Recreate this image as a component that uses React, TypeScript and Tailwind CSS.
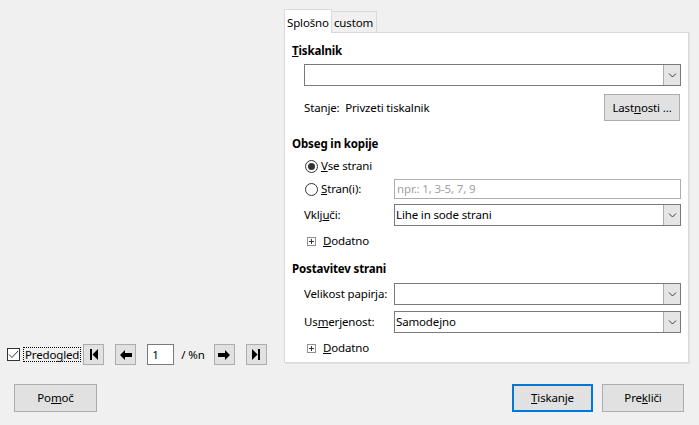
import React from "react";

const font = { fontFamily: '"Segoe UI", "Noto Sans", "Open Sans", sans-serif' };

const Chevron = () => (
  <svg width="9" height="6" viewBox="0 0 9 6">
    <path d="M1 1.5 L4.5 5 L8 1.5" fill="none" stroke="#404040" strokeWidth="1" />
  </svg>
);

const Combo = ({ value }: { value?: string }) => (
  <div className="flex-1 h-[22px] flex items-stretch bg-white border border-[#7a7a7a]">
    <div className="flex-1 flex items-center pl-[1px] text-black">{value}</div>
    <div className="w-[17px] flex items-center justify-center bg-[#e5e5e5] border-l border-[#adadad]">
      <Chevron />
    </div>
  </div>
);

const Plus = () => (
  <span className="w-[9px] h-[9px] border border-[#919191] bg-white flex items-center justify-center">
    <svg width="5" height="5" viewBox="0 0 5 5">
      <path d="M0 2.5 H5 M2.5 0 V5" stroke="#333" strokeWidth="1" />
    </svg>
  </span>
);

const Radio = ({ checked }: { checked?: boolean }) => (
  <span className="w-[13px] h-[13px] rounded-full border border-[#333] bg-white flex items-center justify-center">
    {checked && <span className="w-[7px] h-[7px] rounded-full bg-[#333]" />}
  </span>
);

const NavButton = ({ children }: { children: React.ReactNode }) => (
  <div className="w-[21px] h-[21px] bg-[#e1e1e1] border border-[#adadad] flex items-center justify-center">
    {children}
  </div>
);

const Btn = ({ children, primary, w }: { children: React.ReactNode; primary?: boolean; w: string }) => (
  <div
    className={`${w} h-[28px] bg-[#e1e1e1] flex items-center justify-center text-black ${
      primary ? "border-2 border-[#0078d7]" : "border border-[#adadad]"
    }`}
  >
    {children}
  </div>
);

export default function App() {
  return (
    <div
      className="w-[699px] h-[425px] bg-[#f0f0f0] flex flex-col text-[11.5px] tracking-[-0.15px] text-black"
      style={font}
    >
      <div className="flex pt-[8px]">
        {/* left: preview controls */}
        <div className="w-[284px] flex items-end">
          <div className="flex items-center h-[21px] pl-[7px] mb-[-2px]">
            <span className="w-[13px] h-[13px] border border-[#333] bg-white flex items-center justify-center">
              <svg width="11" height="9" viewBox="0 0 11 9">
                <path d="M1 4.5 L4 7.5 L10 1" fill="none" stroke="#333" strokeWidth="1" />
              </svg>
            </span>
            <span className="ml-[3px] px-[1px] leading-[13px] border border-dotted border-black">
              Predo<u>g</u>led
            </span>
            <div className="ml-[2px]">
              <NavButton>
                <svg width="8" height="11" viewBox="0 0 8 11">
                  <rect x="0" y="0" width="2" height="11" fill="#000" />
                  <path d="M8 0 L2.5 5.5 L8 11 Z" fill="#000" />
                </svg>
              </NavButton>
            </div>
            <div className="ml-[11px]">
              <NavButton>
                <svg width="12" height="10" viewBox="0 0 12 10">
                  <path d="M0 5 L5 0 L5 3 L12 3 L12 7 L5 7 L5 10 Z" fill="#000" />
                </svg>
              </NavButton>
            </div>
            <div className="ml-[11px] w-[27px] h-[21px] bg-white border border-[#7a7a7a] flex items-center pl-[4px]">1</div>
            <span className="ml-[7px]">/ %n</span>
            <div className="ml-[9px]">
              <NavButton>
                <svg width="12" height="10" viewBox="0 0 12 10">
                  <path d="M12 5 L7 0 L7 3 L0 3 L0 7 L7 7 L7 10 Z" fill="#000" />
                </svg>
              </NavButton>
            </div>
            <div className="ml-[11px]">
              <NavButton>
                <svg width="8" height="11" viewBox="0 0 8 11">
                  <path d="M0 0 L5.5 5.5 L0 11 Z" fill="#000" />
                  <rect x="6" y="0" width="2" height="11" fill="#000" />
                </svg>
              </NavButton>
            </div>
          </div>
        </div>

        {/* right: tabs */}
        <div className="w-[405px] flex flex-col">
          <div className="flex items-end h-[24px]">
            <div className="w-[48px] h-[24px] bg-white border border-b-0 border-[#d9d9d9] pl-[2px] pt-[4px] relative z-10 mb-[-1px]">
              Splošno
            </div>
            <div className="w-[45px] h-[21px] bg-[#f0f0f0] border border-l-0 border-b-0 border-[#d9d9d9] pl-[2px] pt-[2px]">
              custom
            </div>
          </div>
          <div className="w-[405px] h-[331px] bg-white border border-[#d9d9d9] shadow-[1px_1px_0_#e3e3e3] flex flex-col pl-[7px] pr-[7px] pt-[10px]">
            <div className="h-[16px] leading-[16px] font-bold">
              <u>T</u>iskalnik
            </div>
            <div className="mt-[5px] pl-[12px] flex">
              <Combo />
            </div>
            <div className="mt-[8px] pl-[12px] flex items-center justify-between h-[27px]">
              <span>Stanje:&nbsp;&nbsp;Privzeti tiskalnik</span>
              <div className="w-[76px] h-[27px] bg-[#e1e1e1] border border-[#adadad] flex items-center justify-center mr-[1px]">
                Last<u>n</u>osti ...
              </div>
            </div>
            <div className="mt-[15px] h-[16px] leading-[16px] font-bold">Obseg in kopije</div>
            <div className="mt-[4px] h-[20px] pl-[13px] flex items-center">
              <Radio checked />
              <span className="ml-[3px]">
                <u>V</u>se strani
              </span>
            </div>
            <div className="mt-[3px] h-[20px] pl-[13px] flex items-center">
              <Radio />
              <span className="ml-[3px] w-[73px]">
                <u>S</u>tran(i):
              </span>
              <div className="flex-1 h-[20px] bg-white border border-[#adadad] flex items-center pl-[2px] text-[#a0a0a0]">
                npr.: 1, 3-5, 7, 9
              </div>
            </div>
            <div className="mt-[5px] pl-[12px] flex items-center">
              <span className="w-[90px]">
                Vklj<u>u</u>či:
              </span>
              <Combo value="Lihe in sode strani" />
            </div>
            <div className="mt-[7px] h-[16px] pl-[15px] flex items-center">
              <Plus />
              <span className="ml-[7px]">
                <u>D</u>odatno
              </span>
            </div>
            <div className="mt-[12px] h-[16px] leading-[16px] font-bold">Postavitev strani</div>
            <div className="mt-[6px] pl-[12px] flex items-center">
              <span className="w-[90px]">
                Velikost papir<u>j</u>a:
              </span>
              <Combo />
            </div>
            <div className="mt-[6px] pl-[12px] flex items-center">
              <span className="w-[90px]">
                Us<u>m</u>erjenost:
              </span>
              <Combo value="Samodejno" />
            </div>
            <div className="mt-[7px] h-[16px] pl-[15px] flex items-center">
              <Plus />
              <span className="ml-[7px]">
                <u>D</u>odatno
              </span>
            </div>
          </div>
        </div>
      </div>

      <div className="flex items-center justify-between pl-[14px] pr-[15px] mt-[21px]">
        <Btn w="w-[83px]">
          Po<u>m</u>oč
        </Btn>
        <div className="flex gap-[9px]">
          <Btn w="w-[81px]" primary>
            <u>T</u>iskanje
          </Btn>
          <Btn w="w-[82px]">
            Pre<u>k</u>liči
          </Btn>
        </div>
      </div>
    </div>
  );
}
